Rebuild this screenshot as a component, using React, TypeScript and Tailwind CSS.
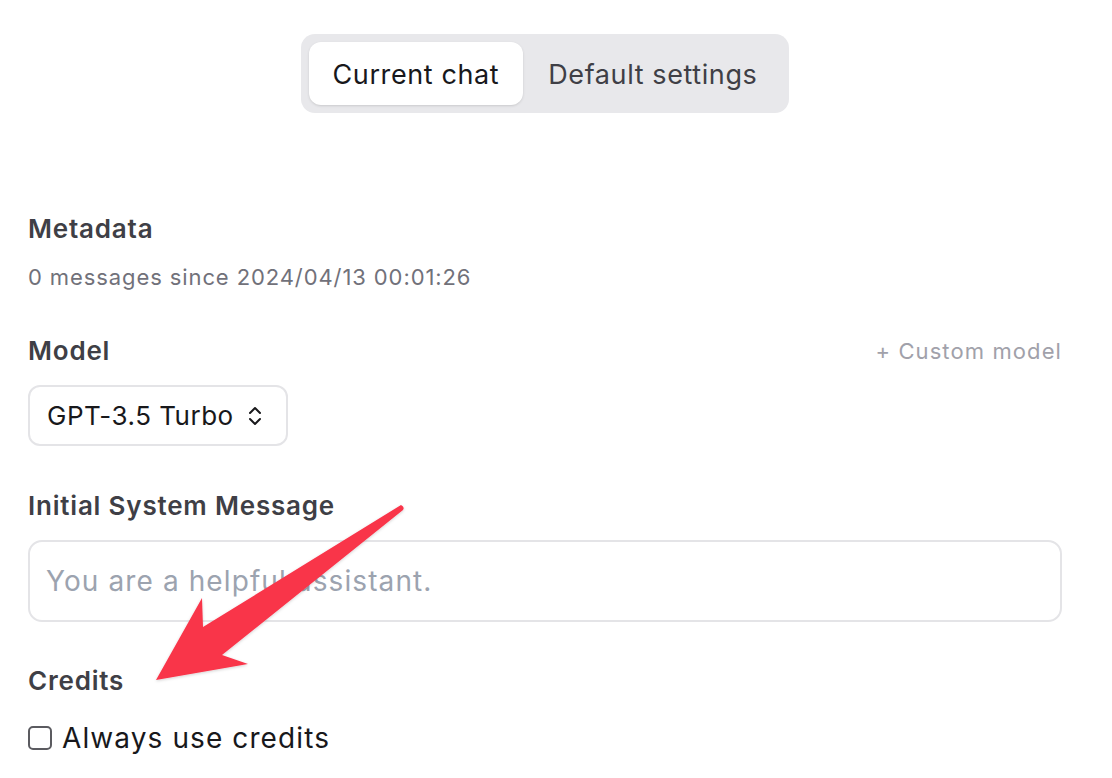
import { useState } from 'react';

const ChevronsUpDown = () => (
  <svg width="14" height="22" viewBox="0 0 14 22" fill="none" stroke="#18181b" strokeWidth="2" strokeLinecap="round" strokeLinejoin="round">
    <path d="M2 8 L7 3 L12 8" />
    <path d="M2 14 L7 19 L12 14" />
  </svg>
);

const Arrow = () => (
  <svg className="absolute inset-0 pointer-events-none" width="1112" height="778" viewBox="0 0 1112 778">
    <defs>
      <filter id="arrowShadow" x="-10%" y="-10%" width="120%" height="120%">
        <feDropShadow dx="0" dy="1" stdDeviation="1.5" floodColor="#000" floodOpacity="0.18" />
      </filter>
    </defs>
    <path
      d="M401 505 Q405 507 403 510 L222 655 L248 664 L156 680 L202 598 L203 627 Z"
      fill="#f9344a"
      filter="url(#arrowShadow)"
    />
  </svg>
);

const App = () => {
  const [tab, setTab] = useState('current');
  const [useCredits, setUseCredits] = useState(false);

  return (
    <div className="relative w-[1112px] h-[778px] bg-white overflow-hidden" style={{ fontFamily: 'Inter, "Noto Sans", sans-serif' }}>
      <div className="ml-[28px] w-[1034px] flex flex-col">
        <div className="mt-[34px] self-center flex items-center gap-[1px] p-[8px] h-[79px] rounded-[14px] bg-[#e8e8eb]">
          <button
            className={`h-[63px] pt-[3px] px-[24px] rounded-[12px] whitespace-nowrap text-[27px] tracking-[0.6px] ${tab === 'current' ? 'bg-white text-[#18181b] shadow-sm' : 'text-[#3f3f46]'}`}
            onClick={() => setTab('current')}
          >
            Current chat
          </button>
          <button
            className={`h-[63px] pt-[3px] px-[24px] rounded-[12px] whitespace-nowrap text-[27px] tracking-[0.6px] ${tab === 'default' ? 'bg-white text-[#18181b] shadow-sm' : 'text-[#3f3f46]'}`}
            onClick={() => setTab('default')}
          >
            Default settings
          </button>
        </div>

        <h3 className="mt-[100px] text-[26px] leading-[32px] tracking-[0.8px] font-semibold text-[#3f3f46]">Metadata</h3>
        <p className="mt-[17px] text-[22px] leading-[30px] tracking-[0.9px] text-[#71717a]">0 messages since 2024/04/13 00:01:26</p>

        <div className="mt-[43px] flex items-center justify-between">
          <h3 className="text-[26px] leading-[32px] tracking-[0.8px] font-semibold text-[#3f3f46]">Model</h3>
          <span className="text-[22px] leading-[32px] tracking-[1.1px] text-[#a1a1aa]">+ Custom model</span>
        </div>
        <div className="mt-[18px]">
          <button className="h-[61px] pl-[17px] pr-[24px] flex items-center gap-[14px] rounded-[12px] border-2 border-[#e4e4e7] text-[26px] tracking-[0.5px] text-[#18181b]">
            GPT-3.5 Turbo
            <ChevronsUpDown />
          </button>
        </div>

        <h3 className="mt-[44px] text-[26px] leading-[32px] tracking-[0.8px] font-semibold text-[#3f3f46]">Initial System Message</h3>
        <input
          className="mt-[18px] h-[82px] w-full px-[16px] rounded-[14px] border-2 border-[#e4e4e7] text-[28px] tracking-[1.1px] outline-none placeholder:text-[#9ca3af]"
          placeholder="You are a helpful assistant."
        />

        <h3 className="mt-[43px] text-[26px] leading-[32px] tracking-[0.8px] font-semibold text-[#3f3f46]">Credits</h3>
        <label className="mt-[23px] flex items-center gap-[10px] h-[36px] cursor-pointer" onClick={() => setUseCredits(!useCredits)}>
          <span className={`w-[24px] h-[24px] rounded-[5px] border-2 ${useCredits ? 'bg-[#2563eb] border-[#2563eb]' : 'border-[#5b5b60] bg-white'}`} />
          <span className="text-[28px] leading-[36px] tracking-[1.1px] text-[#18181b]">Always use credits</span>
        </label>
      </div>
      <Arrow />
    </div>
  );
};

export default App;
